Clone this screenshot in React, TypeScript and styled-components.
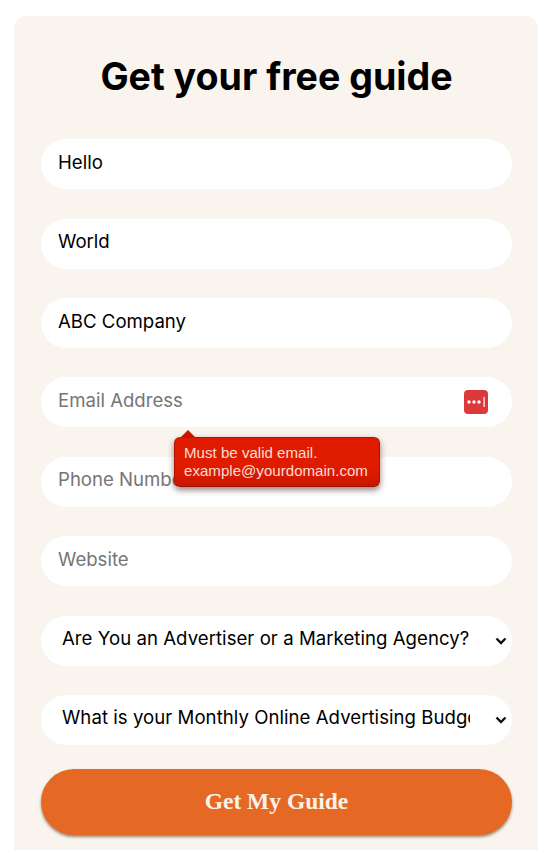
import React from 'react'
import styled, {createGlobalStyle} from 'styled-components'

const GlobalStyle = createGlobalStyle`
  html, body {
    margin: 0;
    padding: 0;
    height: 850px;
    overflow: hidden;
    background: #fff;
  }
  * {
    box-sizing: border-box;
  }
`
const Card = styled.form`
  width: 524px;
  height: 834px;
  margin: 16px 0 0 14px;
  padding: 38px 26px 0 27px;
  background: #f9f4ed;
  border-radius: 12px 12px 0 0;
  display: flex;
  flex-direction: column;
`
const Title = styled.h1`
  margin: 0 0 39.3px;
  height: 46px;
  line-height: 46px;
  text-align: center;
  font-family: Inter, sans-serif;
  font-size: 37.6px;
  font-weight: 700;
  color: #000;
`
const Fields = styled.div`
  display: flex;
  flex-direction: column;
  gap: 29.4px;
`
const Row = styled.div`
  position: relative;
  height: 50px;
`
const Input = styled.input`
  width: 100%;
  height: 100%;
  padding: 0 17px 5px;
  border: none;
  outline: none;
  border-radius: 25px;
  background: #fff;
  font-family: Inter, sans-serif;
  font-size: 18.6px;
  color: #000;
  &::placeholder {
    color: #757575;
    opacity: 1;
  }
`
const Select = styled.select`
  appearance: none;
  width: 100%;
  height: 100%;
  padding: 0 42px 6px 21px;
  border: none;
  outline: none;
  border-radius: 25px;
  background: #fff;
  font-family: Inter, sans-serif;
  font-size: 18.6px;
  letter-spacing: 0.04px;
  color: #000;
`
const Chevron = styled.svg`
  position: absolute;
  right: 4px;
  top: 19px;
  width: 14px;
  height: 12px;
  fill: none;
  stroke: #111;
  stroke-width: 2.4;
  pointer-events: none;
`
const PasswordBadge = styled.span`
  position: absolute;
  right: 24px;
  top: 13px;
  width: 24px;
  height: 24px;
  border-radius: 4px;
  background: #dc3a3a;
  display: flex;
  align-items: center;
  justify-content: center;
`
const Tooltip = styled.div`
  position: absolute;
  z-index: 2;
  left: 133px;
  top: 60px;
  width: 206px;
  height: 50px;
  padding: 6px 9px;
  border: 1px solid #b51100;
  border-bottom-color: #9c1000;
  border-radius: 6px;
  background: linear-gradient(#e01c00 60%, #c91700);
  box-shadow: 0 3px 6px rgba(60, 20, 20, 0.55);
  color: #fbdcd4;
  font-family: "Liberation Sans", Arial, sans-serif;
  font-size: 15.1px;
  line-height: 18px;
  white-space: nowrap;
  &::before {
    content: '';
    position: absolute;
    left: 5px;
    top: -8px;
    border-left: 8px solid transparent;
    border-right: 8px solid transparent;
    border-bottom: 8px solid #c81500;
  }
`
const Submit = styled.button`
  height: 66px;
  margin-top: 24px;
  padding: 0 0 2px;
  border: none;
  border-radius: 33px;
  background: #e66825;
  box-shadow: 0 2px 3px rgba(90, 60, 40, 0.6);
  color: #fbf3e8;
  font-family: "Liberation Serif", "Times New Roman", serif;
  font-size: 23.5px;
  font-weight: 700;
`

const dropdowns = [
    'Are You an Advertiser or a Marketing Agency?',
    'What is your Monthly Online Advertising Budget?'
]

export default function App() {
    return (
        <>
            <GlobalStyle/>
            <Card onSubmit={e => e.preventDefault()}>
                <Title>Get your free guide</Title>
                <Fields>
                    <Row><Input defaultValue='Hello'/></Row>
                    <Row><Input defaultValue='World'/></Row>
                    <Row><Input defaultValue='ABC Company'/></Row>
                    <Row>
                        <Input placeholder='Email Address'/>
                        <PasswordBadge>
                            <svg width='20' height='10' viewBox='0 0 20 10'>
                                <circle cx='3' cy='5' r='1.7' fill='#fff'/>
                                <circle cx='8' cy='5' r='1.7' fill='#fff'/>
                                <circle cx='13' cy='5' r='1.7' fill='#fff'/>
                                <rect x='17.5' y='0' width='1.2' height='10' fill='#fff'/>
                            </svg>
                        </PasswordBadge>
                        <Tooltip>Must be valid email.<br/>example@yourdomain.com</Tooltip>
                    </Row>
                    <Row><Input placeholder='Phone Number'/></Row>
                    <Row><Input placeholder='Website'/></Row>
                    {dropdowns.map(label =>
                        <Row key={label}>
                            <Select><option>{label}</option></Select>
                            <Chevron viewBox='0 0 14 12'><path d='M2.5 3.5L7 8l4.5-4.5'/></Chevron>
                        </Row>
                    )}
                </Fields>
                <Submit type='submit'>Get My Guide</Submit>
            </Card>
        </>
    )
}
